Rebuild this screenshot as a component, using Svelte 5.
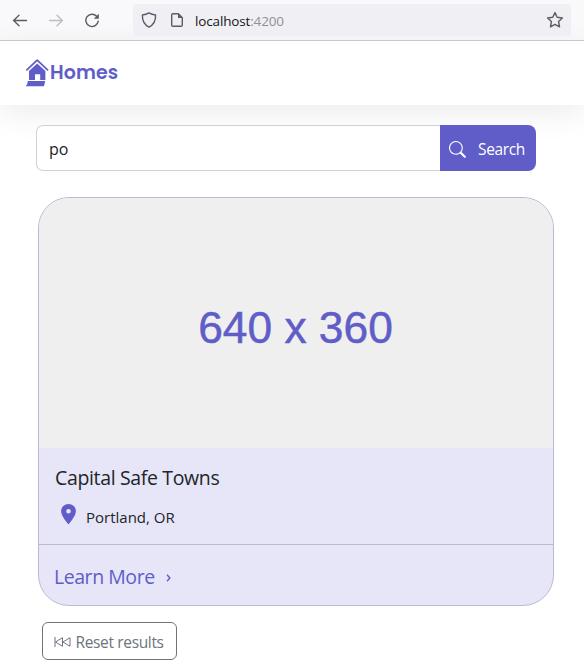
<script>
  let query = $state('po');
  const home = { name: 'Capital Safe Towns', city: 'Portland', state: 'OR' };
</script>

<div class="window">
  <div class="toolbar">
    <svg class="nav" width="16" height="16" viewBox="0 0 16 16"><path d="M14.500 8.500H1.600M7 3.200 1.600 8.500 7 13.800" /></svg>
    <svg class="nav dim" width="16" height="16" viewBox="0 0 16 16"><path d="M1.500 8.500h12.900M9 3.200l5.400 5.300L9 13.800" /></svg>
    <svg class="nav" width="16" height="16" viewBox="0 0 16 16"><path d="M12.600 4.200A6.200 6.200 0 1 0 14.200 9.200" /><path class="solid" d="M14.800 1.700v5H9.800z" /></svg>
    <div class="address">
      <svg class="nav shield" width="16" height="16" viewBox="0 0 16 16"><path d="M8 .9C6 2.200 3.900 2.800 1.400 3c-.2 5.400 1.600 9.600 6.600 12.100 5-2.500 6.800-6.700 6.600-12.100C12.100 2.800 10 2.200 8 .9z" /></svg>
      <svg class="nav page" width="14" height="16" viewBox="0 0 14 16"><path d="M8.300 1.700H3a1.300 1.300 0 0 0-1.300 1.300v10A1.300 1.300 0 0 0 3 14.300h8a1.300 1.300 0 0 0 1.300-1.300V5.700z" /><path class="solid" d="M8 1l5 5H8z" /></svg>
      <span class="url">localhost<span>:4200</span></span>
      <svg class="nav star" width="18" height="18" viewBox="0 0 18 18"><path d="M9 1.600l2.200 4.700 5.200.7-3.800 3.600.95 5.200L9 13.300l-4.550 2.500.95-5.200L1.600 7l5.200-.7z" /></svg>
    </div>
  </div>

  <header>
    <svg class="logo" width="24" height="28" viewBox="0 0 24 28">
      <path class="roof" d="M1.900 10.800 12.200 1.200l10.300 9.600" />
      <path d="M12.200 4.400l8.200 7.600v8.900h-5.200v-5.600H10v5.600H4v-8.900z" />
      <path d="M2.800 22h17.400l-1 4.400q-.2.900-1.200.9H.9q.1-1.600 1.200-1.900z" />
    </svg>
    <span class="brand">Homes</span>
  </header>

  <main>
    <form class="search" onsubmit={(e) => e.preventDefault()}>
      <input type="text" bind:value={query} />
      <button type="submit">
        <svg width="17" height="17" viewBox="0 0 16 16"><path fill="#fff" d="M11.742 10.344a6.500 6.500 0 1 0-1.397 1.398l3.850 3.850a1 1 0 0 0 1.415-1.414l-3.850-3.850zM12 6.500a5.500 5.500 0 1 1-11 0 5.500 5.500 0 0 1 11 0z" /></svg>
        <span>Search</span>
      </button>
    </form>

    <article>
      <div class="photo"><span>640 x 360</span></div>
      <div class="details">
        <h2>{home.name}</h2>
        <p>
          <svg width="16" height="22" viewBox="0 0 16 22"><path fill="#605dc8" fill-rule="evenodd" d="M7.500 .9A7.400 7.400 0 0 0 .1 8.300C.1 13.200 7.500 21.500 7.500 21.500S14.900 13.200 14.900 8.300A7.400 7.400 0 0 0 7.500 .9zm0 5.100a2.300 2.300 0 1 1 0 4.600 2.300 2.300 0 0 1 0-4.600z" /></svg>
          <span>{home.city}, {home.state}</span>
        </p>
      </div>
      <div class="more"><span>Learn More</span><svg width="6" height="8" viewBox="0 0 6 8"><path d="M1 .7 3.900 4 1 7.300" fill="none" stroke="#605dc8" stroke-width="1.400" /></svg></div>
    </article>

    <button class="reset" type="button">
      <svg width="17" height="12" viewBox="0 0 17 12"><path d="M1 1v10M8.500 1.700v8.600L1.500 6zM16 1.700v8.600L9 6z" /></svg>
      <span>Reset results</span>
    </button>
  </main>
</div>

<style>
  :global(body) { margin: 0; background: #fff; }
  .window { width: 584px; height: 667px; overflow: hidden; font-family: "Open Sans", "Noto Sans", sans-serif; color: #212529; }
  .window, .window * { box-sizing: border-box; }
  svg { display: block; flex: none; }
  .toolbar { height: 41px; display: flex; align-items: center; background: #f9f9fb; border-bottom: 1px solid #ccc; padding: 0 13px 0 12px; gap: 20px; }
  .nav { fill: none; stroke: #5b5b66; stroke-width: 1.400; stroke-linecap: round; stroke-linejoin: round; }
  .dim { stroke: #bdbdc2; }
  .solid { fill: #5b5b66; stroke: none; }
  .address { flex: 1; margin-left: 13px; height: 32px; border-radius: 4px; background: #f0f0f4; display: flex; align-items: center; padding: 0 7px 0 8px; }
  .page { margin-left: 13px; }
  .url { margin-left: 11px; font-size: 13.500px; letter-spacing: -0.150px; color: #15141a; white-space: nowrap; line-height: 18px; padding-top: 2px; }
  .url span { color: #8f8f98; }
  .star { margin-left: auto; }
  header { height: 64px; display: flex; align-items: center; padding-left: 25px; background: #fff; box-shadow: 0 8px 32px rgba(0, 0, 0, 0.080); }
  .logo { fill: #605dc8; }
  .roof { fill: none; stroke: #605dc8; stroke-width: 1.800; stroke-linecap: round; stroke-linejoin: round; }
  .brand { font: 600 19px/28px Poppins, Inter, sans-serif; color: #605dc8; margin-left: 1px; letter-spacing: 0.100px; }
  main { padding: 20px 30px 0 36px; }
  .search { display: flex; width: 500px; height: 46px; margin: 0; position: relative; }
  input { width: 404px; height: 46px; border: 1px solid #ced0dc; border-right: 0; border-radius: 7px 0 0 7px; padding: 2px 12px 0; font: 16px "Open Sans", sans-serif; color: #212529; outline: 0; background: #fff; }
  .search button { width: 96px; border: 0; border-radius: 0 8px 8px 0; background: #605dc8; display: flex; align-items: center; padding: 2px 0 0 9px; color: #fff; font: 15.500px "Open Sans", sans-serif; }
  .search button span { margin-left: 12px; letter-spacing: -0.350px; }
  article { width: 516px; height: 409px; margin: 26px 0 0 2px; border: 1px solid #bdb9d4; border-radius: 31px; overflow: hidden; background: #e7e5f8; }
  .photo { height: 250px; background: #efefef; display: flex; justify-content: center; align-items: center; padding: 10px 1px 0 0; font: 44.300px "Liberation Sans", Arial, sans-serif; color: #605dc8; -webkit-text-stroke: 0.500px #605dc8; }
  .details { height: 97px; border-bottom: 1px solid #bdb9cf; padding: 16px 16px 0; }
  h2 { margin: 0; font-weight: 400; font-size: 19.500px; line-height: 28px; letter-spacing: -0.350px; white-space: nowrap; }
  p { display: flex; align-items: center; margin: 11px 0 0 6px; height: 22px; font-size: 15px; }
  p span { margin-left: 9px; padding-top: 6px; white-space: nowrap; }
  .more { display: flex; align-items: center; height: 60px; padding: 2px 0 0 15px; font-size: 19.500px; color: #605dc8; }
  .more span { letter-spacing: -0.450px; white-space: nowrap; }
  .more svg { margin: 4px 0 0 11px; }
  .reset { margin: 16px 0 0 6px; width: 135px; height: 38px; border: 1px solid #6c757d; border-radius: 6px; background: #fff; color: #6c757d; display: flex; align-items: center; padding: 2px 0 0 11px; font: 15.500px "Open Sans", sans-serif; }
  .reset svg { fill: none; stroke: #6c757d; stroke-width: 1; }
  .reset span { margin-left: 4.500px; letter-spacing: -0.350px; white-space: nowrap; }
</style>
